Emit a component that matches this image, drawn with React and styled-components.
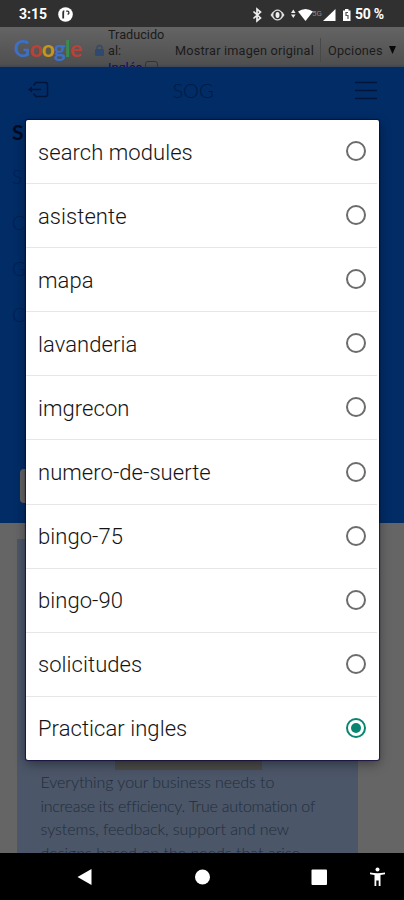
import React from "react";
import styled, { createGlobalStyle } from "styled-components";

const Global = createGlobalStyle`
  * { box-sizing: border-box; }
  body { margin: 0; background: #000; }
  svg { display: block; }
`;

const Screen = styled.div`
  position: relative;
  width: 404px;
  height: 900px;
  overflow: hidden;
  display: flex;
  flex-direction: column;
  font-family: Roboto, sans-serif;
  background: #656565;
`;

const StatusBar = styled.header`
  flex: 0 0 27px;
  display: flex;
  align-items: center;
  justify-content: space-between;
  padding: 2px 20px 0 19px;
  background: #303030;
  color: #fff;
`;

const StatusGroup = styled.div`
  display: flex;
  align-items: center;
  height: 25px;
`;

const StatusText = styled.span`
  font-size: 14px;
  font-weight: 700;
  line-height: 25px;
  white-space: nowrap;
  letter-spacing: ${(p) => p.$spacing || 0}px;
`;

const Icon = styled.svg`
  flex: none;
  margin-right: ${(p) => p.$gap || 0}px;
  margin-left: ${(p) => p.$lead || 0}px;
  margin-top: ${(p) => p.$drop || 0}px;
`;

const TranslateBar = styled.div`
  flex: 0 0 40px;
  display: flex;
  align-items: center;
  padding-left: 14px;
  overflow: hidden;
  background: linear-gradient(#646464, #5c5c5c 35%, #505050 92%, #3c4654);
  color: #1b1b1b;
  font-size: 12.7px;
  white-space: nowrap;
`;

const Logo = styled.div`
  width: 81px;
  font-family: Lato, sans-serif;
  font-size: 22.5px;
  font-weight: 700;
  line-height: 40px;
  padding-top: 4px;
  letter-spacing: -0.7px;
`;

const LogoLetter = styled.span`
  color: ${(p) => p.$color};
`;

const Translated = styled.div`
  width: 67px;
  height: 40px;
  line-height: 15.5px;
  margin-left: 4px;
`;

const Language = styled.div`
  display: flex;
  gap: 3px;
  padding-top: 2px;
  color: #0c0c68;
`;

const LanguageBox = styled.span`
  width: 13px;
  height: 14px;
  margin-top: 1px;
  border: 1px solid #333;
  border-radius: 3px;
`;

const Original = styled.div`
  width: 145px;
  padding-top: 6px;
  letter-spacing: 0.2px;
`;

const Options = styled.div`
  display: flex;
  align-items: center;
  height: 24px;
  margin-top: 6px;
  padding-left: 7px;
  border-left: 1px solid #484848;
  gap: 6px;
  letter-spacing: 0.2px;
`;

const Hero = styled.section`
  flex: 0 0 456px;
  display: flex;
  flex-direction: column;
  background: #022c66;
`;

const Nav = styled.nav`
  height: 46px;
  display: grid;
  grid-template-columns: 28px 1fr 28px;
  align-items: center;
  padding: 0 24px;
  color: #001a45;
`;

const Brand = styled.span`
  text-align: center;
  font-family: Lato, sans-serif;
  font-weight: 300;
  font-size: 20px;
  line-height: 46px;
  padding-right: 18px;
`;

const SideList = styled.div`
  flex: 1;
  display: flex;
  flex-direction: column;
  padding: 0 0 0 12px;
`;

const SideItem = styled.div`
  height: 46px;
  line-height: ${(p) => (p.$strong ? 38 : 36)}px;
  font-family: Lato, sans-serif;
  font-size: ${(p) => (p.$strong ? 21 : 19)}px;
  font-weight: ${(p) => (p.$strong ? 700 : 300)};
  color: ${(p) => (p.$strong ? "#000b20" : "#012050")};
`;

const Field = styled.div`
  width: 340px;
  height: 34px;
  margin: auto 0 20px 8px;
  border-radius: 4px;
  background: #636363;
`;

const Content = styled.section`
  flex: 1;
  min-height: 0;
  padding: 16px 46px 0 17px;
  overflow: hidden;
`;

const Card = styled.article`
  height: 340px;
  display: flex;
  flex-direction: column;
  align-items: center;
  background: #4b5668;
`;

const Picture = styled.div`
  width: 147px;
  height: 82px;
  margin: 149px 0 0 2px;
  background: #4a4a49;
`;

const Copy = styled.p`
  align-self: stretch;
  margin: 0;
  padding-left: 23.5px;
  font-family: Lato, sans-serif;
  font-weight: 300;
  font-size: 16px;
  line-height: 23.6px;
  color: #222d3c;
  white-space: nowrap;
`;

const Line = styled.span`
  display: block;
  letter-spacing: ${(p) => p.$spacing}px;
`;

const SystemNav = styled.footer`
  flex: 0 0 47px;
  background: #000;
`;

const Dialog = styled.div`
  position: absolute;
  left: 26px;
  top: 120px;
  width: 352.5px;
  height: 640px;
  display: flex;
  flex-direction: column;
  border-radius: 2px;
  background: #fff;
  box-shadow: 0 0 1px 1px rgba(15, 5, 70, 0.75), 0 4px 12px rgba(0, 0, 0, 0.4);
`;

const Option = styled.label`
  flex: 1;
  display: flex;
  align-items: center;
  justify-content: space-between;
  padding: 0 10.5px 0 12px;
  margin-right: 2px;
  border-bottom: ${(p) => (p.$last ? 0 : "1px solid #e6e6e6")};
`;

const OptionText = styled.span`
  font-size: 22px;
  font-weight: 340;
  line-height: 30px;
  padding-top: 2px;
  color: #141414;
  white-space: nowrap;
  letter-spacing: 0.06px;
`;

const Radio = styled.span`
  width: 20px;
  height: 20px;
  display: grid;
  place-items: center;
  border: 2px solid ${(p) => (p.$on ? "#078571" : "#6c6c6c")};
  border-radius: 50%;
  margin-bottom: 1px;
`;

const Dot = styled.span`
  width: 10px;
  height: 10px;
  border-radius: 50%;
  background: #078571;
`;

const options = [
  "search modules",
  "asistente",
  "mapa",
  "lavanderia",
  "imgrecon",
  "numero-de-suerte",
  "bingo-75",
  "bingo-90",
  "solicitudes",
  "Practicar ingles",
];

const logo = [
  ["G", "#3b70c4"],
  ["o", "#bb4138"],
  ["o", "#c4971c"],
  ["g", "#3b70c4"],
  ["l", "#2f9150"],
  ["e", "#bb4138"],
];

export default function App() {
  return (
    <Screen>
      <Global />
      <StatusBar>
        <StatusGroup>
          <StatusText>3:15</StatusText>
          <Icon width="15" height="15" viewBox="0 0 15 15" $lead={11}>
            <circle cx="7.5" cy="7.5" r="7.3" fill="#fff" />
            <path d="M5.200 11.500V5.500Q5.200 4.200 6.300 4.200" fill="none" stroke="#303030" strokeWidth="1.800" />
            <path d="M8.200 4.200H9.500q1.400 0 1.400 1.500T9.500 7.200" fill="none" stroke="#303030" strokeWidth="1.300" />
          </Icon>
        </StatusGroup>
        <StatusGroup>
          <Icon width="101" height="16" viewBox="250 6 101 16" $gap={3}>
            <path d="m252.500 10.500 7 6.500-3.500 3V8l3.500 3-7 6.500" fill="none" stroke="#eee" strokeWidth="1.7" />
            <path d="M269.500 14q7-11 14 0-7 11-14 0Z" fill="#ddd" />
            <circle cx="276.500" cy="14" r="4.200" fill="#303030" />
            <ellipse cx="276.500" cy="14" rx="2" ry="3" fill="#eee" />
            <path d="m290 12 2.300-3.500 2.300 3.500Zm0 1.500 2.300 3.500 2.300-3.500Z" fill="#eee" />
            <path d="M297 10.500q7.500-5 15 0L304.500 20Z" fill="#fff" />
            <text x="311" y="15" fontFamily="Roboto" fontSize="8" fill="#888">5G</text>
            <path d="M322 20 334.500 8v12Z" fill="#fff" />
            <path d="M342 9.500h2V8h3.500v1.500h2V20H342Z" fill="#fff" />
            <path d="M347 11.500h-2v3h2v3.500" fill="none" stroke="#555" strokeWidth="1.2" />
          </Icon>
          <StatusText $spacing={-0.2}>50 %</StatusText>
        </StatusGroup>
      </StatusBar>

      <TranslateBar>
        <Logo>
          {logo.map(([letter, color], i) => (
            <LogoLetter key={i} $color={color}>{letter}</LogoLetter>
          ))}
        </Logo>
        <Icon width="9" height="12" viewBox="0 0 9 12" $drop={6}>
          <path d="M2 6V4a2.500 2.500 0 0 1 5 0v2" fill="none" stroke="#354a68" strokeWidth="1.500" />
          <rect y="5" width="9" height="7" rx="1" fill="#2e4a70" />
        </Icon>
        <Translated>
          <div>Traducido</div>
          <div>al:</div>
          <Language>Inglés <LanguageBox /></Language>
        </Translated>
        <Original>Mostrar imagen original</Original>
        <Options>
          <span>Opciones</span>
          <svg width="7" height="8" viewBox="0 0 7 8"><path d="M0 0h7L3.500 8Z" fill="#080808" /></svg>
        </Options>
      </TranslateBar>

      <Hero>
        <Nav>
          <svg width="28" height="24" viewBox="0 0 28 24" fill="none" stroke="#001539" strokeWidth="1.500">
            <path d="M9.500 7.500 12 4.500h9.500q2 0 2 2v10q0 2-2 2H12l-2.500-3M6 11.500h11" />
            <path d="m4 11.500 4-3v6Z" fill="#001539" stroke="none" />
          </svg>
          <Brand>SOG</Brand>
          <svg width="28" height="24" viewBox="0 0 28 24" stroke="#001539" strokeWidth="1.500">
            <path d="M3 4.500h22M3 12.500h22M3 20.500h22" />
          </svg>
        </Nav>
        <SideList>
          <SideItem $strong>S</SideItem>
          <SideItem>S</SideItem>
          <SideItem>C</SideItem>
          <SideItem>G</SideItem>
          <SideItem>C</SideItem>
          <Field />
        </SideList>
      </Hero>

      <Content>
        <Card>
          <Picture />
          <Copy>
            <Line $spacing={-0.05}>Everything your business needs to</Line>
            <Line $spacing={-0.26}>increase its efficiency. True automation of</Line>
            <Line $spacing={-0.03}>systems, feedback, support and new</Line>
            <Line $spacing={0.02}>designs based on the needs that arise</Line>
          </Copy>
        </Card>
      </Content>

      <SystemNav>
        <svg width="404" height="47" viewBox="0 853 404 47" fill="#fff">
          <path d="M77.500 877 91.500 869v16Z" />
          <circle cx="202.500" cy="877" r="7.500" />
          <rect x="311.500" y="869.500" width="15.500" height="15.500" rx="1" />
          <circle cx="377.500" cy="869.500" r="2" />
          <path d="M370 872.500q7.500 1.500 15 0v1.800l-4.500.8V886h-1.800v-5.500h-2.400V886h-1.800v-10.900l-4.500-.8Z" />
        </svg>
      </SystemNav>

      <Dialog role="radiogroup">
        {options.map((name, i) => {
          const last = i === options.length - 1;
          return (
            <Option key={name} $last={last}>
              <OptionText>{name}</OptionText>
              <Radio $on={last}>{last && <Dot />}</Radio>
            </Option>
          );
        })}
      </Dialog>
    </Screen>
  );
}
